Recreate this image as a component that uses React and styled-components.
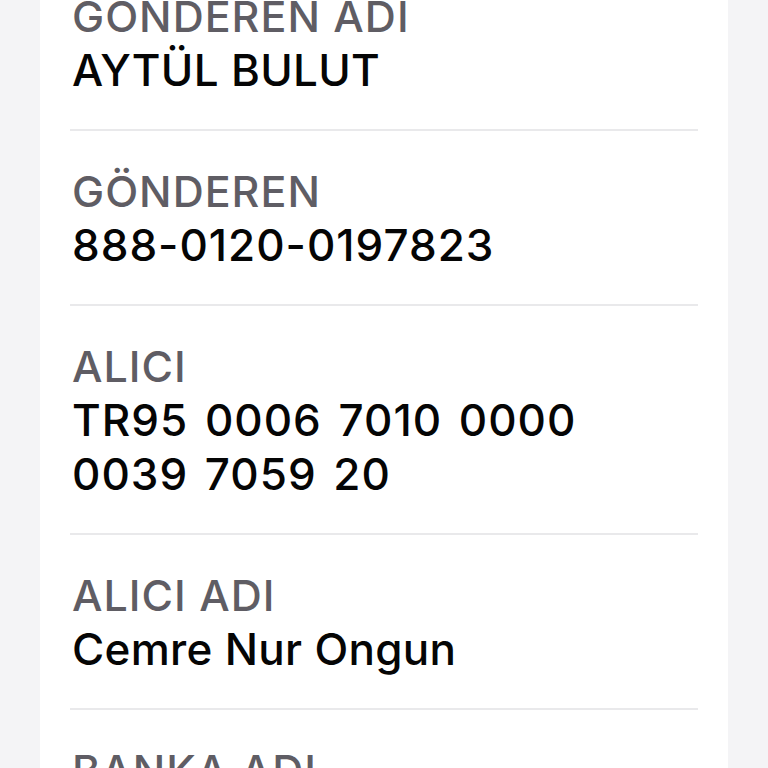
import React from "react";
import styled, { createGlobalStyle } from "styled-components";

const GlobalStyle = createGlobalStyle`
  html, body {
    margin: 0;
    padding: 0;
    background: #f4f4f6;
    overflow: hidden;
  }
`;

const Page = styled.div`
  display: flex;
  justify-content: center;
  height: 768px;
  padding: 0 40px;
  box-sizing: border-box;
`;

const Card = styled.div`
  flex: 1;
  background: #ffffff;
  padding: 0 30px;
  margin-top: -44px;
  font-family: "Inter", "Noto Sans", sans-serif;
`;

const Row = styled.div`
  padding: 33px 2px 32px;
  border-bottom: 2px solid #e9e9eb;
`;

const Label = styled.div`
  font-size: 43px;
  line-height: 54px;
  font-weight: 500;
  letter-spacing: 1px;
  color: #5f5d64;
  text-transform: uppercase;
`;

const Value = styled.div`
  font-size: 44px;
  line-height: 54px;
  font-weight: 500;
  color: #050505;
  width: 560px;
  letter-spacing: ${(p) => (p.$numeric ? "1px" : "0.3px")};
  word-spacing: ${(p) => (p.$numeric ? "4px" : "0")};
`;

const rows = [
  { label: "GÖNDEREN ADI", value: "AYTÜL BULUT" },
  { label: "GÖNDEREN", value: "888-0120-0197823", numeric: true },
  { label: "ALICI", value: "TR95 0006 7010 0000 0039 7059 20", numeric: true },
  { label: "ALICI ADI", value: "Cemre Nur Ongun" },
  { label: "BANKA ADI", value: "" },
];

export default function App() {
  return (
    <>
      <GlobalStyle />
      <Page>
        <Card>
          {rows.map((r) => (
            <Row key={r.label}>
              <Label>{r.label}</Label>
              <Value $numeric={r.numeric}>{r.value}</Value>
            </Row>
          ))}
        </Card>
      </Page>
    </>
  );
}
